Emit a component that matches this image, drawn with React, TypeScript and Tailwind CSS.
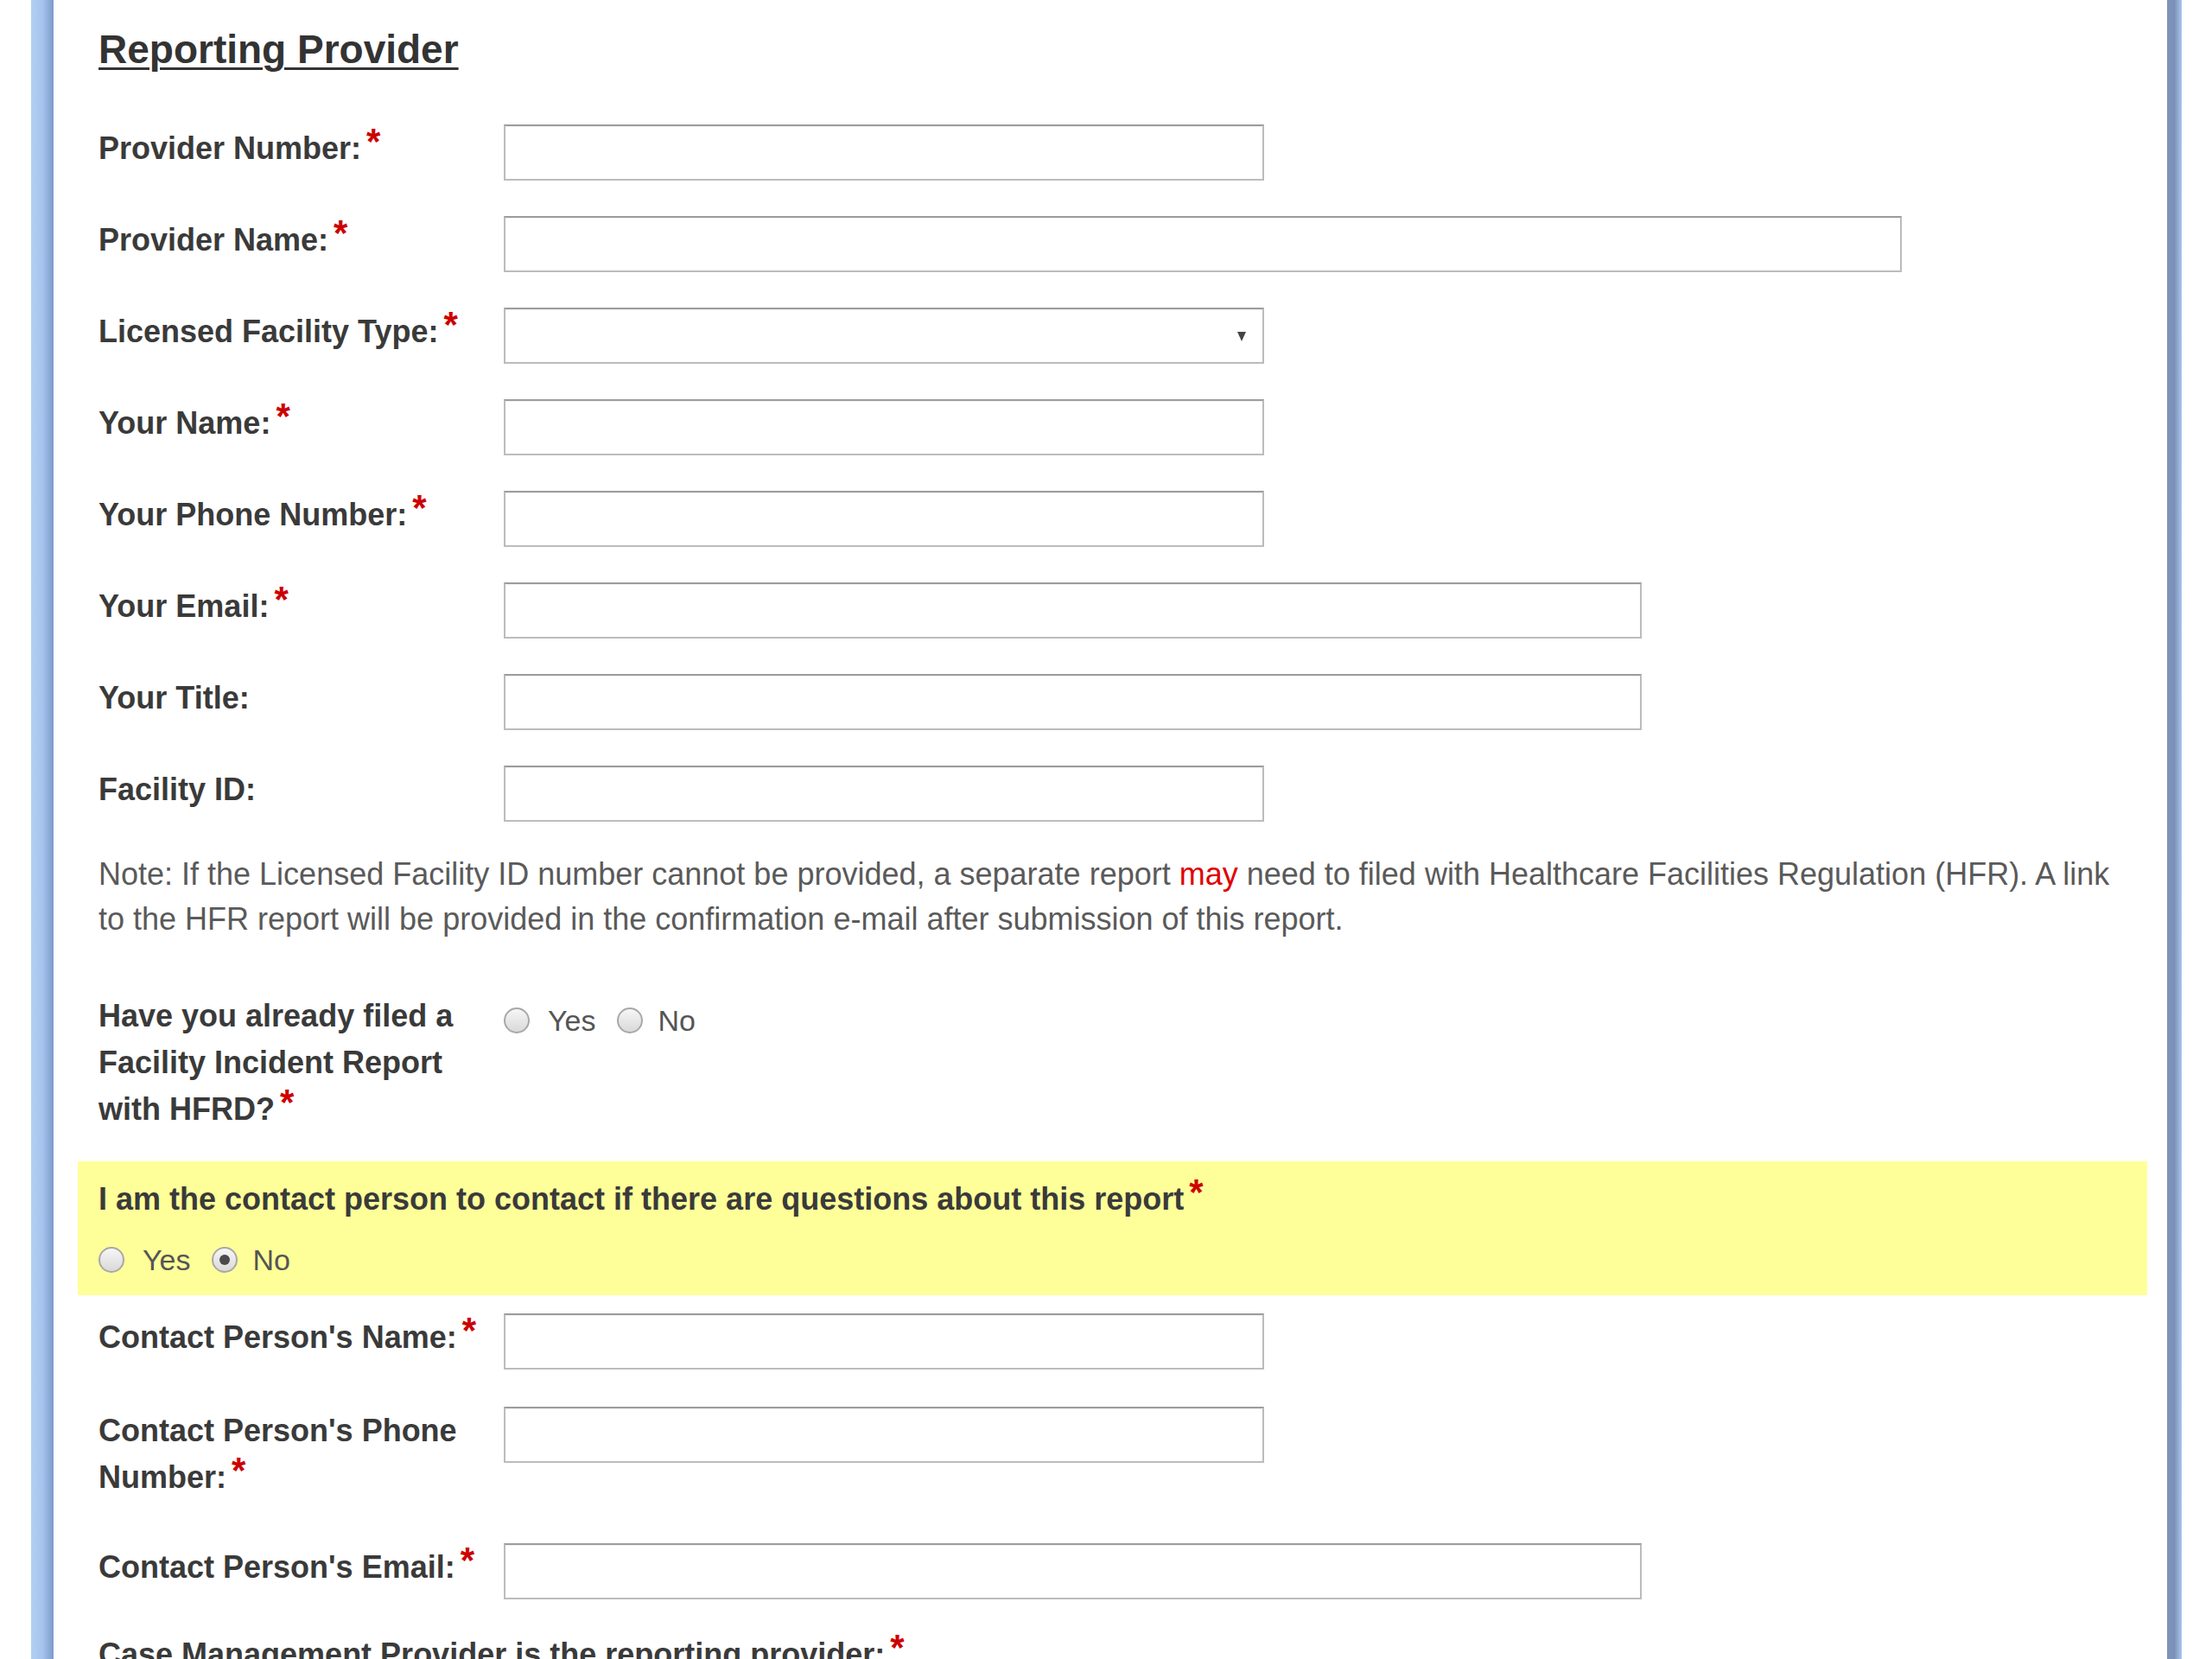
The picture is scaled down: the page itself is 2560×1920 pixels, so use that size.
import React from "react";

const font = { fontFamily: '"Liberation Sans", Arial, sans-serif' };

function Star() {
  return (
    <span className="relative top-[-6px] ml-[6px] text-[42px] leading-none text-[#cc0000]">*</span>
  );
}

function Box({ width, select }: { width: string; select?: boolean }) {
  return (
    <div
      className={`${width} h-[65px] shrink-0 border-2 border-[#bcbcbc] border-t-[#9c9c9c] bg-white shadow-[inset_0_1px_1px_rgba(0,0,0,0.06)] flex items-center justify-end pr-[18px]`}
    >
      {select && (
        <svg width="12" height="14" viewBox="0 0 12 14">
          <path d="M1 2h10L6 13z" fill="#444" />
        </svg>
      )}
    </div>
  );
}

function Field({
  label,
  required,
  width,
  select,
}: {
  label: string;
  required?: boolean;
  width: string;
  select?: boolean;
}) {
  return (
    <div className="flex items-start">
      <div className="w-[469px] shrink-0 pt-[1px] text-[36px] leading-[54px] font-bold text-[#3a3a3a]">
        {label}
        {required && <Star />}
      </div>
      <Box width={width} select={select} />
    </div>
  );
}

function Radio({ checked }: { checked?: boolean }) {
  return (
    <span className="w-[30px] h-[30px] shrink-0 rounded-full border-2 border-[#a8a8a8] bg-gradient-to-b from-[#f6f6f6] to-[#d9d9d9] flex items-center justify-center">
      {checked && <span className="w-[12px] h-[12px] rounded-full bg-[#4a4a4a]" />}
    </span>
  );
}

function YesNo({ checked }: { checked?: "yes" | "no" }) {
  return (
    <div className="flex items-center h-[54px] text-[34px] text-[#555]">
      <Radio checked={checked === "yes"} />
      <span className="ml-[21px] mr-[25px]">Yes</span>
      <Radio checked={checked === "no"} />
      <span className="ml-[17px]">No</span>
    </div>
  );
}

const rows = [
  { label: "Provider Number:", required: true, width: "w-[880px]" },
  { label: "Provider Name:", required: true, width: "w-[1618px]" },
  { label: "Licensed Facility Type:", required: true, width: "w-[880px]", select: true },
  { label: "Your Name:", required: true, width: "w-[880px]" },
  { label: "Your Phone Number:", required: true, width: "w-[880px]" },
  { label: "Your Email:", required: true, width: "w-[1317px]" },
  { label: "Your Title:", width: "w-[1317px]" },
  { label: "Facility ID:", width: "w-[880px]" },
];

export default function App() {
  return (
    <div className="w-[2560px] h-[1920px] overflow-hidden bg-white flex" style={font}>
      <div className="w-[36px] shrink-0" />
      <div className="w-[26px] shrink-0 bg-gradient-to-r from-[#b2cff2] via-[#a6c4ed] to-[#7d9bcb]" />

      <div className="flex-1 pl-[28px] pr-[23px] pt-[31px]">
        <h1 className="pl-[24px] text-[46px] leading-[53px] font-bold text-[#333] underline decoration-[3px] underline-offset-[5px]">
          Reporting Provider
        </h1>

        <div className="mt-[60px] pl-[24px] flex flex-col gap-[41px]">
          {rows.map((r) => (
            <Field key={r.label} {...r} />
          ))}
        </div>

        <p className="mt-[35px] pl-[24px] pr-[20px] text-[36px] leading-[52px] text-[#5a5a5a]">
          Note: If the Licensed Facility ID number cannot be provided, a separate report{" "}
          <span className="text-[#e00000]">may</span> need to filed with Healthcare Facilities
          Regulation (HFR). A link to the HFR report will be provided in the confirmation e-mail
          after submission of this report.
        </p>

        <div className="mt-[59px] pl-[24px] flex items-start">
          <div className="w-[469px] shrink-0 text-[36px] leading-[54px] font-bold text-[#3a3a3a]">
            Have you already filed a Facility Incident Report with HFRD?
            <Star />
          </div>
          <div className="pt-[5px]">
            <YesNo />
          </div>
        </div>

        <div className="mt-[33px] bg-[#ffff99] pl-[24px] pt-[17px] pb-[14px]">
          <div className="text-[36px] leading-[54px] font-bold text-[#3a3a3a]">
            I am the contact person to contact if there are questions about this report
            <Star />
          </div>
          <div className="mt-[16px]">
            <YesNo checked="no" />
          </div>
        </div>

        <div className="mt-[21px] pl-[24px]">
          <Field label="Contact Person's Name:" required width="w-[880px]" />
        </div>
        <div className="mt-[43px] pl-[24px]">
          <Field label="Contact Person's Phone Number:" required width="w-[880px]" />
        </div>
        <div className="mt-[49px] pl-[24px]">
          <Field label="Contact Person's Email:" required width="w-[1317px]" />
        </div>

        <div className="mt-[37px] pl-[24px] text-[36px] leading-[54px] font-bold text-[#3a3a3a]">
          Case Management Provider is the reporting provider:
          <Star />
        </div>
      </div>

      <div className="w-[17px] shrink-0 bg-gradient-to-r from-[#8193b6] via-[#7b91ba] to-[#aac8ee]" />
      <div className="w-[35px] shrink-0" />
    </div>
  );
}
